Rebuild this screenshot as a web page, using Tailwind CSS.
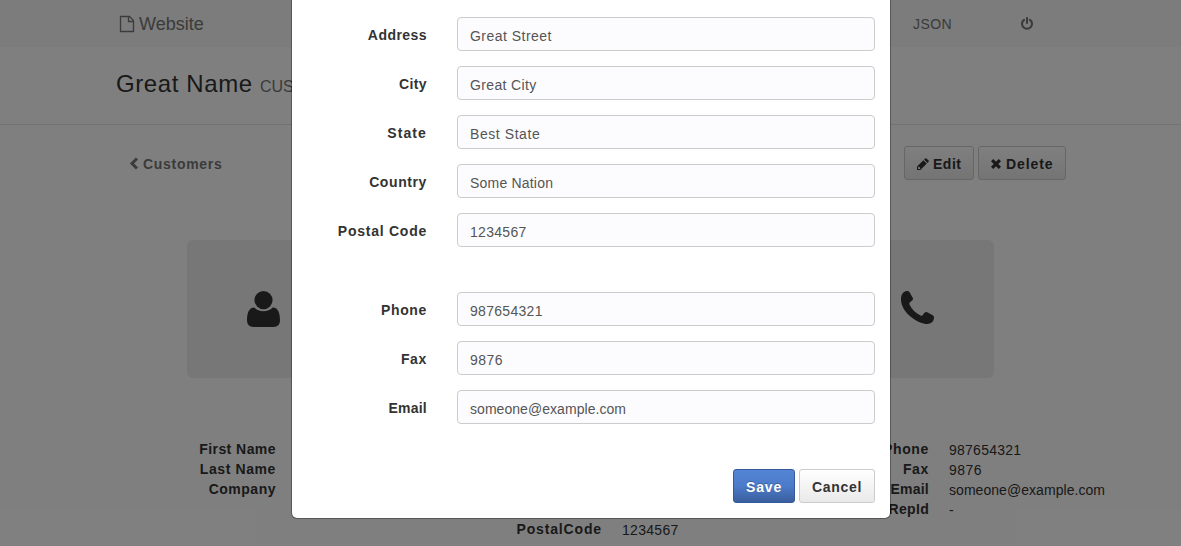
<!DOCTYPE html>
<html lang="en">
<head>
<meta charset="utf-8">
<title>Great Name</title>
<script src="https://cdn.jsdelivr.net/npm/@tailwindcss/browser@4"></script>
</head>
<body class="relative h-[546px] w-[1181px] overflow-hidden bg-white font-['Liberation_Sans',sans-serif] text-[14px] leading-5 text-[#333]">
<div class="h-[546px] overflow-hidden">
  <nav class="flex h-[47px] items-center bg-[#f8f8f8] pl-[119px] text-[#777]">
    <svg class="mr-1 mt-px h-[18px] w-4 shrink-0" viewBox="0 0 16 18" fill="none" stroke="currentColor" stroke-width="1.3"><path d="M1.5 1.5H10.5L14.5 5.5V16.5H1.5zM9.5 1.5V6.5H14.5"/></svg>
    <span class="w-[774px] text-[18px]">Website</span>
    <span class="w-[107px] tracking-[0.4px]">JSON</span>
    <svg class="h-[13px] w-[14px]" viewBox="0 0 14 13" fill="none" stroke="currentColor" stroke-width="2.1" stroke-linecap="round"><path d="M4 2.8A5 5 0 1 0 10 2.8M7 1V6"/></svg>
  </nav>
  <header class="flex h-[78px] items-baseline border-b border-[#e4e4e4] pl-[116px] pt-[21px]">
    <h1 class="w-[144px] whitespace-nowrap text-[24px] leading-8 tracking-[0.6px]">Great Name</h1>
    <span class="text-[16px] text-[#777]">CUSTOMER</span>
  </header>
  <div class="flex h-[115px] items-start pl-[129px] pt-[21px] font-bold">
    <a class="flex h-[34px] w-[775px] items-center text-[#777]"><svg class="mr-1 h-[13px] w-[10px]" viewBox="0 0 10 13" fill="none" stroke="currentColor" stroke-width="3"><path d="M8 1.5L3 6.5L8 11.5"/></svg><span class="pt-0.5 tracking-[0.7px]">Customers</span></a>
    <button class="mr-1 flex h-[34px] w-[70px] items-center rounded-[3px] border border-[#ccc] bg-linear-to-b from-white to-[#e9e9e9] pl-3">
      <svg class="mr-1 mt-px h-3 w-3 shrink-0" viewBox="0 0 12 12" fill="currentColor"><path fill-rule="evenodd" d="M0 12V8.6L6.4 2.2L9.8 5.6L3.4 12zM1.1 9.1V10.9H2.9L3.5 10.2L1.8 8.5zM7.1 1.5L8.2.4Q8.8-.1 9.4.4L11.6 2.6Q12.1 3.2 11.6 3.8L10.5 4.9z"/></svg><span class="pt-0.5 tracking-[0.5px]">Edit</span>
    </button>
    <button class="flex h-[34px] w-[88px] items-center rounded-[3px] border border-[#ccc] bg-linear-to-b from-white to-[#e9e9e9] pl-3">
      <svg class="mr-[5px] mt-0.5 h-[10px] w-[10px] shrink-0" viewBox="0 0 10 10" fill="none" stroke="currentColor" stroke-width="3.2"><path d="M1.1 1.1L8.9 8.9M8.9 1.1L1.1 8.9"/></svg><span class="pt-0.5 tracking-[0.9px]">Delete</span>
    </button>
  </div>
  <div class="flex justify-between pl-[187px] pr-[187px]">
    <div class="flex h-[138px] w-[152px] items-center justify-center rounded-md bg-[#eee]">
      <svg class="h-9 w-[33px]" viewBox="0 0 33 36" fill="#333"><circle cx="16.5" cy="9.1" r="9.1"/><path d="M7.3 16.5Q11 20.3 16.5 20.3T25.7 16.5C31.5 16.5 33 23 33 29.5Q33 36 26.5 36H6.5Q0 36 0 29.5C0 23 1.5 16.5 7.3 16.5Z"/></svg>
    </div>
    <div class="flex h-[138px] w-[152px] items-center justify-center rounded-md bg-[#eee]">
      <svg class="-mt-[3px] mr-[2px] h-[33px] w-[33px]" viewBox="0 0 33 33" fill="#333"><path d="M5.7 0Q7.7-.1 8.4 1.1L11.6 6.5Q12.5 8.1 11.4 9.2L8.8 11.5Q8 12.5 8.5 13.6Q12 21 19.5 24.6Q20.7 25.1 21.5 24.2L23.5 21.7Q24.7 20.5 26.3 21.3L32.1 24.5Q33 25 33 26.6C33 31 29.8 33 26.2 33C18 33 0 22.5 0 8.2C0 3.5 2.3.3 5.7 0Z"/></svg>
    </div>
  </div>
  <div class="flex items-start pt-[61px]">
    <dl class="w-[276px] text-right font-bold">
      <dt class="tracking-[0.45px]">First Name</dt><dt class="tracking-[0.6px]">Last Name</dt><dt class="tracking-[0.5px]">Company</dt>
    </dl>
    <dl class="grid w-[451px] grid-cols-[326px_1fr] gap-x-5 pt-20">
      <dt class="text-right font-bold tracking-[0.85px]">PostalCode</dt><dd class="pt-px tracking-[0.3px]">1234567</dd>
    </dl>
    <dl class="grid grid-cols-[202px_1fr] gap-x-5">
      <dt class="text-right font-bold tracking-[0.65px]">Phone</dt><dd class="h-5 pt-px tracking-[0.25px]">987654321</dd>
      <dt class="text-right font-bold tracking-[0.65px]">Fax</dt><dd class="h-5 pt-px tracking-[0.5px]">9876</dd>
      <dt class="text-right font-bold tracking-[0.25px]">Email</dt><dd class="h-5 pt-px tracking-[0.05px]">someone@example.com</dd>
      <dt class="text-right font-bold tracking-[0.3px]">RepId</dt><dd class="h-5 pt-px">-</dd>
    </dl>
  </div>
</div>

<div class="absolute inset-0 bg-black/50"></div>

<section class="absolute left-[291px] top-[-10px] flex h-[529px] w-[600px] flex-col rounded-md border border-black/30 bg-white bg-clip-padding pl-[15px] pr-[15px] pt-[26px]">
  <form class="grid grid-cols-[120px_418px] gap-x-[30px] gap-y-[15px] leading-[34px]">
    <label class="mt-px h-[33px] text-right font-bold tracking-[0.45px]">Address</label><div class="h-[34px] rounded-[4px] border border-[#ccc] bg-[#fcfcfe] pl-3 tracking-[0.47px] text-[#555]"><span class="block h-8 leading-9">Great Street</span></div>
    <label class="mt-px h-[33px] text-right font-bold tracking-[0.4px]">City</label><div class="h-[34px] rounded-[4px] border border-[#ccc] bg-[#fcfcfe] pl-3 tracking-[0.37px] text-[#555]"><span class="block h-8 leading-9">Great City</span></div>
    <label class="mt-px h-[33px] text-right font-bold tracking-[1.1px]">State</label><div class="h-[34px] rounded-[4px] border border-[#ccc] bg-[#fcfcfe] pl-3 tracking-[0.57px] text-[#555]"><span class="block h-8 leading-9">Best State</span></div>
    <label class="mt-px h-[33px] text-right font-bold tracking-[0.6px]">Country</label><div class="h-[34px] rounded-[4px] border border-[#ccc] bg-[#fcfcfe] pl-3 tracking-[0.2px] text-[#555]"><span class="block h-8 leading-9">Some Nation</span></div>
    <label class="mt-px h-[33px] text-right font-bold tracking-[0.75px]">Postal Code</label><div class="h-[34px] rounded-[4px] border border-[#ccc] bg-[#fcfcfe] pl-3 tracking-[0.3px] text-[#555]"><span class="block h-8 leading-9">1234567</span></div>
    <div class="col-span-2 h-[15px]"></div>
    <label class="mt-px h-[33px] text-right font-bold tracking-[0.65px]">Phone</label><div class="h-[34px] rounded-[4px] border border-[#ccc] bg-[#fcfcfe] pl-3 tracking-[0.3px] text-[#555]"><span class="block h-8 leading-9">987654321</span></div>
    <label class="mt-px h-[33px] text-right font-bold tracking-[0.65px]">Fax</label><div class="h-[34px] rounded-[4px] border border-[#ccc] bg-[#fcfcfe] pl-3 tracking-[0.5px] text-[#555]"><span class="block h-8 leading-9">9876</span></div>
    <label class="mt-px h-[33px] text-right font-bold tracking-[0.25px]">Email</label><div class="h-[34px] rounded-[4px] border border-[#ccc] bg-[#fcfcfe] pl-3 tracking-[0.05px] text-[#555]"><span class="block h-8 leading-9">someone@example.com</span></div>
  </form>
  <div class="mt-[45px] flex justify-end gap-1 font-bold">
    <button class="h-[34px] w-[62px] rounded-[3px] border border-[#345a9c] bg-linear-to-b from-[#5484d4] via-[#4c7bca] to-[#3a5f9e] pt-0.5 tracking-[0.85px] text-white [text-shadow:0_-1px_0_rgba(0,0,0,.25)]">Save</button>
    <button class="h-[34px] w-[76px] rounded-[3px] border border-[#ccc] bg-linear-to-b from-white to-[#e9e9e9] pt-0.5 tracking-[0.7px]">Cancel</button>
  </div>
</section>
</body>
</html>
